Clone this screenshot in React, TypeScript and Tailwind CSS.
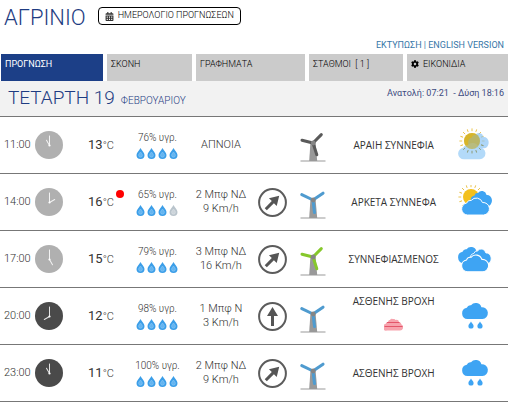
import { clsx } from "clsx";
import { useState } from "react";
import { FaCalendarAlt, FaCog } from "react-icons/fa";

type Sky = "thin" | "partly" | "cloudy" | "rain";

interface IForecast {
  time: string;
  hour: number;
  night?: boolean;
  temp: number;
  max?: boolean;
  humidity: number;
  drops: number;
  wind: string[];
  direction?: number;
  blades: "calm" | "light" | "gentle";
  label: string;
  sky: Sky;
  dust?: boolean;
}

const forecasts: IForecast[] = [
  { time: "11:00", hour: 11, temp: 13, humidity: 76, drops: 4, wind: ["ΑΠΝΟΙΑ"], blades: "calm", label: "ΑΡΑΙΗ ΣΥΝΝΕΦΙΑ", sky: "thin" },
  { time: "14:00", hour: 2, temp: 16, max: true, humidity: 65, drops: 3, wind: ["2 Μπφ ΝΔ", "9 Km/h"], direction: 45, blades: "light", label: "ΑΡΚΕΤΑ ΣΥΝΝΕΦΑ", sky: "partly" },
  { time: "17:00", hour: 5, temp: 15, humidity: 79, drops: 4, wind: ["3 Μπφ ΝΔ", "16 Km/h"], direction: 45, blades: "gentle", label: "ΣΥΝΝΕΦΙΑΣΜΕΝΟΣ", sky: "cloudy" },
  { time: "20:00", hour: 8, night: true, temp: 12, humidity: 98, drops: 4, wind: ["1 Μπφ Ν", "3 Km/h"], direction: 0, blades: "light", label: "ΑΣΘΕΝΗΣ ΒΡΟΧΗ", sky: "rain", dust: true },
  { time: "23:00", hour: 11, night: true, temp: 11, humidity: 100, drops: 4, wind: ["2 Μπφ ΝΔ", "9 Km/h"], direction: 45, blades: "light", label: "ΑΣΘΕΝΗΣ ΒΡΟΧΗ", sky: "rain" },
];

const tabs = ["ΠΡΟΓΝΩΣΗ", "ΣΚΟΝΗ", "ΓΡΑΦΗΜΑΤΑ", "ΣΤΑΘΜΟΙ  [ 1 ]", "ΕΙΚΟΝΙΔΙΑ"];

const cloudPath =
  "M5.5 17A5.7 5.7 0 0 1 4.8 5.7A3.8 3.8 0 0 1 9 3.2A6 6 0 0 1 19.4 5.2A5.9 5.9 0 0 1 20.5 17Z";

const Clock = ({ hour, night }: { hour: number; night?: boolean }) => (
  <svg width="28" height="28" viewBox="0 0 28 28">
    <circle cx="14" cy="14" r="14" fill={night ? "#4a4a4a" : "#b0b0b0"} />
    <g stroke="#fff" strokeLinecap="round" opacity="0.85">
      <path d="M14.5 14.5V5" strokeWidth="1" />
      <path d="M14.5 14.5V8.5" strokeWidth="1" transform={`rotate(${hour * 30} 14.5 14.5)`} />
    </g>
    <circle cx="14.5" cy="14.5" r="1.1" fill="#fff" />
  </svg>
);

const Drop = ({ full }: { full: boolean }) => (
  <svg width="9" height="11" viewBox="0 0 9 11">
    <path d="M4.5 0C5.6 2.3 8.5 4.6 8.5 7a4 4 0 0 1-8 0C.5 4.6 3.4 2.3 4.5 0Z" fill={full ? "#3b9ee8" : "#b9c4cc"} />
    <path d="M4.5 4C5.2 5.2 6.4 6 6.4 7.3a1.9 1.9 0 0 1-3.8 0C2.6 6 3.8 5.2 4.5 4Z" fill={full ? "#64b4ef" : "#ccd4da"} stroke={full ? "#8fcaf6" : "#dde3e7"} strokeWidth="0.6" />
  </svg>
);

const WindArrow = ({ angle }: { angle: number }) => (
  <svg width="29" height="29" viewBox="0 0 29 29">
    <circle cx="14.5" cy="14.5" r="13.4" fill="none" stroke="#5c5c5c" strokeWidth="2" />
    <g transform={`rotate(${angle} 14.5 14.5)`} fill="#555">
      <path d="M14.5 5L20 14H16V24H13V14H9Z" />
    </g>
  </svg>
);

const Turbine = ({ blades }: { blades: IForecast["blades"] }) => {
  const color = { calm: "#5a5a5a", light: "#4f9bcf", gentle: "#86c82b" }[blades];
  const d =
    blades === "light"
      ? "M13 11L1.8 5.6M13 11L23 4.2M13 11L14.5 23.5"
      : "M13 11L2 8.2M13 11L21.3 2.6M13 11L16.8 22.8";
  return (
    <svg width="26" height="30" viewBox="0 0 26 30">
      <path d="M10.5 9.5H15.5L17.2 29H9.2Z" fill="#999" />
      <path d="M.5 29H25.5" stroke="#999" strokeWidth="1" />
      <path d={d} stroke={color} strokeWidth="3" strokeLinecap="round" />
      <circle cx="13.2" cy="11" r="2.4" fill="#858585" />
    </svg>
  );
};

const Sun = ({ x, y }: { x: number; y: number }) => (
  <g transform={`translate(${x} ${y})`}>
    <circle r="8" fill="#f3c01c" />
    {Array.from({ length: 16 }, (_, i) => (
      <path key={i} d="M0 -9.8V-12.6" stroke="#e9be3c" strokeWidth="0.9" transform={`rotate(${i * 22.5})`} />
    ))}
  </g>
);

const SkyIcon = ({ sky }: { sky: Sky }) => (
  <svg width="38" height="34" viewBox="0 0 38 34">
    {sky === "thin" && (
      <>
        <Sun x={14} y={13} />
        <path d={cloudPath} transform="translate(10 4) scale(.8 .95)" fill="#8cc5f5" opacity="0.7" />
        <path d={cloudPath} transform="translate(0 14) scale(1.06 1.02)" fill="#a6d3f8" opacity="0.85" />
        <circle cx="14" cy="13" r="8" fill="#c3ad35" opacity="0.6" />
        <g transform="translate(14 13)">
          {[112.5, 135, 157.5, 180, 202.5, 225].map((a) => (
            <path key={a} d="M0 -9.8V-12.4" stroke="#8c9a78" strokeWidth="0.9" transform={`rotate(${a})`} />
          ))}
        </g>
      </>
    )}
    {sky === "partly" && (
      <>
        <Sun x={13} y={12} />
        <path d={cloudPath} transform="translate(12.5 5) scale(.83 .95)" fill="#3ea4f3" />
        <path d={cloudPath} transform="translate(3.5 12) scale(1.08 1.06)" fill="#3ea4f3" stroke="#fff" strokeWidth="0.9" />
      </>
    )}
    {sky === "cloudy" && (
      <>
        <path d={cloudPath} transform="translate(0 4) scale(.95 1)" fill="#3ea4f3" />
        <path d={cloudPath} transform="translate(12 6) scale(.82 .95)" fill="#3ea4f3" stroke="#fff" strokeWidth="1" />
        <path d={cloudPath} transform="translate(3.5 12) scale(1.05 1.04)" fill="#3ea4f3" stroke="#fff" strokeWidth="1" />
      </>
    )}
    {sky === "rain" && (
      <g fill="#3ea4f3">
        <path d={cloudPath} transform="translate(4 3)" />
        <path d="M13 22.5C13.8 24.2 15.6 25.4 15.6 27a2.6 2.6 0 0 1-5.2 0C10.4 25.4 12.2 24.2 13 22.5Z" />
        <path d="M22 22.5C22.8 24.2 24.6 25.4 24.6 27a2.6 2.6 0 0 1-5.2 0C19.4 25.4 21.2 24.2 22 22.5Z" />
      </g>
    )}
  </svg>
);

const DustIcon = () => (
  <svg width="19" height="13" viewBox="0 0 19 13">
    <path d="M3 12.5A3 3 0 0 1 1.5 6Q2 4 4 4Q4.5 1.5 6 2Q7 0 9 1Q11 .5 11.5 2Q14.5 1 15 4Q17 4 17.5 6.5A3.2 3.2 0 0 1 16 12.5Z" fill="#f7a3ad" />
    <path d="M3 4.5H15.5M.5 8.5H18.5" stroke="#e4556a" strokeWidth="1" />
  </svg>
);

export default function App() {
  const [active, setActive] = useState(0);

  return (
    <main className="bg-white pr-0.5 font-['Roboto','Liberation_Sans',sans-serif] font-light text-[#333]">
      <header className="flex h-9 items-center gap-3 pl-1">
        <h1 className="text-[22px] leading-9 text-[#1e3c82]">ΑΓΡΙΝΙΟ</h1>
        <button className="mb-1 flex h-[18px] items-center gap-1 rounded border border-black px-1.5 text-[9px] text-black">
          <FaCalendarAlt size={9} className="text-[#333]" />
          ΗΜΕΡΟΛΟΓΙΟ ΠΡΟΓΝΩΣΕΩΝ
        </button>
      </header>

      <div className="h-[18px] pr-1 text-right text-[9px] leading-[18px] font-normal text-[#3877a8]">
        <a href="#print">ΕΚΤΥΠΩΣΗ</a> | <a href="#english">ENGLISH VERSION</a>
      </div>

      <nav className="grid grid-cols-[102fr_85fr_109fr_94fr_101fr] gap-1 pl-px">
        {tabs.map((tab, i) => (
          <button
            key={tab}
            onClick={() => setActive(i)}
            className={clsx(
              "flex h-[27px] items-start gap-1 px-1 pt-0.5 text-[9px] leading-4 whitespace-pre",
              active === i ? "bg-[#1c3f87] font-normal text-white" : "bg-[#cbcbcb] text-black"
            )}
          >
            {i === 4 && <FaCog size={8} className="mt-1" />}
            {tab}
          </button>
        ))}
      </nav>

      <div className="flex h-9 items-start justify-between border-b border-[#777] bg-[#f2f2f2] pr-1 pl-2 text-[#1e3c82]">
        <h2 className="flex items-baseline gap-1.5 text-[19px] leading-[34px]">
          ΤΕΤΑΡΤΗ 19 <small className="text-[10px]">ΦΕΒΡΟΥΑΡΙΟΥ</small>
        </h2>
        <p className="text-[9px] leading-6 font-normal whitespace-pre text-[#3c4a80]">Ανατολή: 07:21  - Δύση 18:16</p>
      </div>

      <table className="w-full table-fixed border-separate border-spacing-0">
        <colgroup>
          <col className="w-[13%]" />
          <col className="w-[12%]" />
          <col className="w-[12%]" />
          <col className="w-[13%]" />
          <col className="w-[7%]" />
          <col className="w-[9%]" />
          <col className="w-[23%]" />
          <col className="w-[11%]" />
        </colgroup>
        <tbody>
          {forecasts.map((f) => (
            <tr key={f.time} className="h-[57px] [&>td]:border-b [&>td]:border-[#777]">
              <td className="pl-1">
                <div className="flex items-center gap-1 text-[11px]">
                  {f.time}
                  <Clock hour={f.hour} night={f.night} />
                </div>
              </td>
              <td className="pl-[22px]">
                <div className="flex h-5 items-center gap-0.5 text-[11px]">
                  <span>
                    <span className="text-[13px] font-normal">{f.temp}</span>°C
                  </span>
                  {f.max && <span className="mb-4 size-2 rounded-full bg-[#f00]" />}
                </div>
              </td>
              <td className="text-center text-[10px] leading-3">
                {f.humidity}% υγρ.
                <div className="mt-1 flex justify-center gap-0.5">
                  {[1, 2, 3, 4].map((n) => (
                    <Drop key={n} full={n <= f.drops} />
                  ))}
                </div>
              </td>
              <td className="text-center text-[11px] leading-[14px]">
                {f.wind.map((line) => (
                  <div key={line}>{line}</div>
                ))}
              </td>
              <td className="pl-1">{f.direction !== undefined && <WindArrow angle={f.direction} />}</td>
              <td className="pt-1 pl-2.5">
                <Turbine blades={f.blades} />
              </td>
              <td className="text-center font-['Open_Sans','Noto_Sans',sans-serif] text-[10px] leading-[14px] font-normal whitespace-nowrap">
                {f.label}
                {f.dust && (
                  <div className="mt-2.5 mb-2 flex justify-center">
                    <DustIcon />
                  </div>
                )}
              </td>
              <td className="pl-1.5">
                <SkyIcon sky={f.sky} />
              </td>
            </tr>
          ))}
        </tbody>
      </table>
    </main>
  );
}
